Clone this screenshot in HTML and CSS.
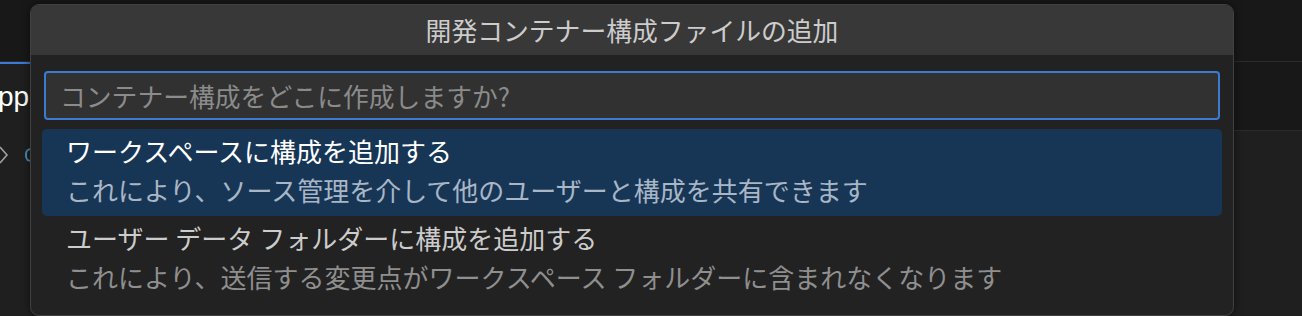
FILE: index.html
```html
<!DOCTYPE html>
<html lang="ja">
<head>
<meta charset="utf-8">
<link rel="stylesheet" href="styles.css">
</head>
<body>
<div class="editor">
  <div class="topbar"></div>
  <div class="tabs">
    <div class="tab active"><span class="tab-label">pp</span></div>
    <div class="tab-rest"></div>
  </div>
  <div class="crumbs">
    <svg class="chev" width="10" height="18" viewBox="0 0 10 18"><path d="M1 1 L8 9 L1 17" fill="none" stroke="#a0a0a0" stroke-width="1.6"/></svg>
    <span class="crumb-icon"></span>
  </div>
</div>

<div class="dialog">
  <div class="title">開発コンテナー構成ファイルの追加</div>
  <div class="body">
    <div class="input"><span class="placeholder">コンテナー構成をどこに作成しますか?</span></div>
    <div class="list">
      <div class="item selected">
        <div class="label">ワークスペースに構成を追加する</div>
        <div class="desc">これにより、ソース管理を介して他のユーザーと構成を共有できます</div>
      </div>
      <div class="item">
        <div class="label">ユーザー データ フォルダーに構成を追加する</div>
        <div class="desc">これにより、送信する変更点がワークスペース フォルダーに含まれなくなります</div>
      </div>
    </div>
  </div>
</div>
</body>
</html>
```
FILE: styles.css
```css
html, body {
  margin: 0;
  padding: 0;
}
body {
  width: 1302px;
  height: 316px;
  overflow: hidden;
  background: #1f1f1f;
  font-family: "Noto Sans CJK JP", "Noto Sans", sans-serif;
  position: relative;
}
.editor {
  display: flex;
  flex-direction: column;
}
.topbar {
  height: 61px;
  background: #181818;
  border-bottom: 1px solid #2b2b2b;
}
.tabs {
  display: flex;
  height: 69px;
}
.tab.active {
  width: 30px;
  background: #1f1f1f;
  border-top: 2px solid #3a7bd5;
  overflow: hidden;
  display: flex;
  align-items: center;
}
.tab-label {
  color: #ffffff;
  font-family: "Liberation Sans", sans-serif;
  font-size: 28px;
  margin-left: -2px;
  margin-top: -2px;
  white-space: nowrap;
}
.tab-rest {
  flex: 1;
  background: #181818;
  border-bottom: 1px solid #2b2b2b;
}
.crumbs {
  height: 46px;
  display: flex;
  align-items: center;
  background: #1f1f1f;
}
.chev {
  margin-left: -1px;
  margin-top: 2px;
}
.crumb-icon {
  width: 6px;
  height: 10px;
  border: 2px solid #4a8ab0;
  border-right: none;
  border-radius: 6px 0 0 6px;
  margin-left: 16px;
  margin-top: 2px;
}
.dialog {
  position: absolute;
  left: 30px;
  top: 4px;
  width: 1202px;
  height: 310px;
  border: 1px solid #414141;
  border-radius: 9px;
  background: #222222;
  overflow: hidden;
  box-shadow: 0 0 8px rgba(0, 0, 0, 0.55);
}
.title {
  height: 50px;
  background: #383838;
  color: #cccccc;
  font-size: 25.8px;
  line-height: 50px;
  text-align: center;
}
.body {
  padding: 16px 11px 0 11px;
}
.input {
  margin: 0 2px;
  height: 45px;
  border: 2px solid #3b7bd4;
  border-radius: 4px;
  background: #313131;
  display: flex;
  align-items: center;
  padding-left: 14px;
}
.placeholder {
  color: #8b8b8b;
  font-size: 25.8px;
}
.list {
  margin-top: 9px;
  display: flex;
  flex-direction: column;
}
.item {
  padding: 2px 24px 8px 24px;
  border-radius: 5px;
}
.item.selected {
  background: #173656;
}
.label {
  font-size: 26px;
  line-height: 40px;
  color: #cccccc;
}
.desc {
  font-size: 26px;
  line-height: 37px;
  color: #8f8f8f;
}
.item.selected .label {
  color: #ffffff;
}
.item.selected .desc {
  color: #a9b6c6;
}
```
